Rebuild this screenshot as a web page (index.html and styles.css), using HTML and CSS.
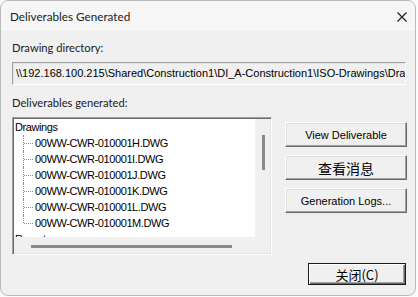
FILE: index.html
```html
<!DOCTYPE html>
<html lang="en">
<head>
    <meta charset="UTF-8">
    <title>Deliverables Generated</title>
    <link rel="stylesheet" href="styles.css">
</head>
<body>

    <div class="window">
        <div class="titlebar">
            <span class="title">Deliverables Generated</span>
            <svg class="close-x" width="10" height="10" viewBox="0 0 10 10">
                <path d="M0.5 0.5 L9.5 9.5 M9.5 0.5 L0.5 9.5" stroke="#1a1a1a" stroke-width="1.1" fill="none"/>
            </svg>
        </div>

        <div class="content">
            <div class="label">Drawing directory:</div>
            <div class="textbox">\\192.168.100.215\Shared\Construction1\DI_A-Construction1\ISO-Drawings\Drawings</div>

            <div class="label label-list">Deliverables generated:</div>
            <div class="main-row">
                <div class="listbox">
                    <div class="list-view">
                        <div class="node">Drawings</div>
                        <div class="item">00WW-CWR-010001H.DWG</div>
                        <div class="item">00WW-CWR-010001I.DWG</div>
                        <div class="item">00WW-CWR-010001J.DWG</div>
                        <div class="item">00WW-CWR-010001K.DWG</div>
                        <div class="item">00WW-CWR-010001L.DWG</div>
                        <div class="item last">00WW-CWR-010001M.DWG</div>
                        <div class="node">Reports</div>
                    </div>
                    <div class="vscroll"><div class="vthumb"></div></div>
                    <div class="hscroll"><div class="hthumb"></div></div>
                    <div class="corner"></div>
                </div>

                <div class="buttons">
                    <div class="btn">View Deliverable</div>
                    <div class="btn cjk">查看消息</div>
                    <div class="btn">Generation Logs...</div>
                </div>
            </div>

            <div class="footer">
                <div class="btn btn-default cjk-close">关闭(C)</div>
            </div>
        </div>
    </div>

</body>
</html>
```

FILE: styles.css
```css
body {
    margin: 0;
    background-color: #fbfbfb;
    font-family: 'Liberation Sans', Arial, sans-serif;
    color: #000;
}
.window {
    width: 416px;
    height: 296px;
    box-sizing: border-box;
    border: 1px solid #b9b9b9;
    border-radius: 8px;
    background-color: #f0f0f0;
    overflow: hidden;
}
.titlebar {
    height: 30px;
    background-color: #f6f6f6;
    display: flex;
    align-items: center;
    justify-content: space-between;
    padding: 0 8px 0 9px;
}
.title {
    font-family: Lato, 'Noto Sans', sans-serif;
    font-size: 11.7px;
    color: #1a1a1a;
}
.close-x {
    margin-top: 1px;
}
.content {
    padding: 0 9px 0 11px;
}
.label {
    font-family: Lato, 'Noto Sans', sans-serif;
    font-size: 11.2px;
    line-height: 16px;
    margin-top: 9px;
    color: #1a1a1a;
}
.textbox {
    margin-top: 6px;
    height: 23px;
    width: 394px;
    box-sizing: border-box;
    border: 1px solid;
    border-color: #a0a0a0 #ffffff #ffffff #a0a0a0;
    box-shadow: inset 1px 1px 0 #e3e3e3;
    padding: 0 0 0 3px;
    font-size: 11px;
    line-height: 21px;
    white-space: nowrap;
    overflow: hidden;
}
.label-list {
    margin-top: 10px;
}
.main-row {
    display: flex;
    align-items: flex-start;
    margin-top: 6px;
}
.listbox {
    width: 260px;
    height: 138px;
    box-sizing: border-box;
    border: 1px solid;
    border-color: #a0a0a0 #ffffff #ffffff #a0a0a0;
    box-shadow: inset 1px 1px 0 #696969, inset -1px -1px 0 #e3e3e3;
    padding: 1px 1px 1px 1px;
    display: grid;
    grid-template-columns: 241px 15px;
    grid-template-rows: 118px 16px;
}
.list-view {
    background: #fff;
    overflow: hidden;
    font-size: 11px;
    letter-spacing: -0.4px;
}
.node {
    height: 16px;
    line-height: 16px;
    padding-left: 1px;
}
.item {
    position: relative;
    height: 16px;
    line-height: 16px;
    padding-left: 21px;
}
.item::before {
    content: '';
    position: absolute;
    left: 9px;
    top: 0;
    height: 16px;
    border-left: 1px dotted #8c8c8c;
}
.item.last::before {
    height: 8px;
}
.item::after {
    content: '';
    position: absolute;
    left: 10px;
    top: 8px;
    width: 9px;
    border-top: 1px dotted #8c8c8c;
}
.vscroll {
    background: #f0f0f0;
    padding: 16px 0 0 7px;
}
.vthumb {
    width: 3px;
    height: 35px;
    background: #8a8a8a;
}
.hscroll {
    background: #f0f0f0;
    padding: 8px 0 0 17px;
}
.hthumb {
    width: 201px;
    height: 3px;
    background: #8a8a8a;
}
.corner {
    background: #f0f0f0;
}
.buttons {
    margin-left: 13px;
    margin-top: 5px;
    display: flex;
    flex-direction: column;
    gap: 8px;
}
.btn {
    width: 122px;
    height: 25px;
    box-sizing: border-box;
    border: 1px solid;
    border-color: #ffffff #696969 #696969 #ffffff;
    box-shadow: inset -1px -1px 0 #a0a0a0, inset 1px 1px 0 #e3e3e3;
    background: #f0f0f0;
    display: flex;
    align-items: center;
    justify-content: center;
    font-size: 11px;
}
.cjk {
    font-family: 'Noto Sans CJK SC', sans-serif;
    font-size: 14px;
}
.footer {
    display: flex;
    justify-content: flex-end;
    margin-top: 8px;
}
.btn-default {
    width: 98px;
    height: 22px;
    border: 1px solid #1a1a1a;
    box-shadow: inset 1px 1px 0 #ffffff, inset -1px -1px 0 #696969, inset -2px -2px 0 #a0a0a0;
}
.cjk-close {
    font-family: 'Noto Sans CJK SC', sans-serif;
    font-size: 13px;
}
```
